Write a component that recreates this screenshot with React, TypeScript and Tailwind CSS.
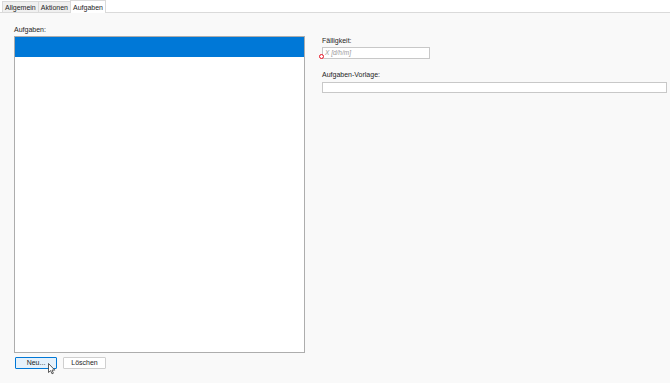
import React from 'react';

const tabs = ['Allgemein', 'Aktionen', 'Aufgaben'];

export default function App() {
  return (
    <div
      className="w-[670px] h-[383px] bg-[#f9f9f9] text-[7px] text-[#1e1e1e] overflow-hidden"
      style={{ fontFamily: '"Liberation Sans", Arial, sans-serif' }}
    >
      {/* Tabs */}
      <div className="flex h-[13px] items-end border-b border-[#dadada] bg-white pl-[2px]">
        {tabs.map((t, i) => (
          <div
            key={t}
            className={
              i === 2
                ? 'h-[13px] px-[2px] pt-[2px] border border-b-0 border-[#dadada] bg-white -mb-px'
                : 'h-[11px] px-[2px] pt-[1px] border border-b-0 border-[#dadada] bg-[#f0f0f0] -mr-px'
            }
          >
            {t}
          </div>
        ))}
      </div>

      <div className="flex pl-[14px] pt-[13px]">
        {/* Left column */}
        <div className="w-[291px] flex flex-col">
          <div className="h-[10px] leading-[8px]">Aufgaben:</div>
          <div className="h-[317px] border border-[#adadad] bg-white">
            <div className="h-[20px] bg-[#0078d7]" />
          </div>
          <div className="flex gap-[6px] mt-[4px] pl-px">
            <div className="relative w-[42px] h-[12px] border border-[#0078d7] bg-[#e5f1fb] rounded-[1px] flex items-center justify-center">
              Neu...
              <svg
                className="absolute left-[32px] top-[5px]"
                width="8"
                height="12"
                viewBox="0 0 8 12"
              >
                <path
                  d="M0.5 0.5 L0.5 9.5 L2.6 7.6 L4 10.8 L5.4 10.2 L4 7.1 L6.8 7.1 Z"
                  fill="white"
                  stroke="#333"
                  strokeWidth="0.8"
                  strokeLinejoin="round"
                />
              </svg>
            </div>
            <div className="w-[43px] h-[12px] border border-[#cfcfcf] bg-white rounded-[1px] flex items-center justify-center">
              Löschen
            </div>
          </div>
        </div>

        {/* Right column */}
        <div className="flex flex-col pl-[17px] pt-[11px] w-[362px]">
          <div className="h-[8px] leading-[8px]">Fälligkeit:</div>
          <div className="relative mt-[2px] w-[108px] h-[12px] border border-[#c8c8c8] bg-white flex items-center pl-[2px] italic text-[#9a9a9a] text-[6.5px]">
            X [d/h/m]
            <span className="absolute left-[-4px] top-[6px] w-[5px] h-[5px] rounded-full bg-white border-[1.5px] border-[#e81123]" />
          </div>
          <div className="h-[8px] leading-[8px] mt-[12px]">Aufgaben-Vorlage:</div>
          <div className="mt-[3px] w-[345px] h-[11px] border border-[#c8c8c8] bg-white" />
        </div>
      </div>
    </div>
  );
}
